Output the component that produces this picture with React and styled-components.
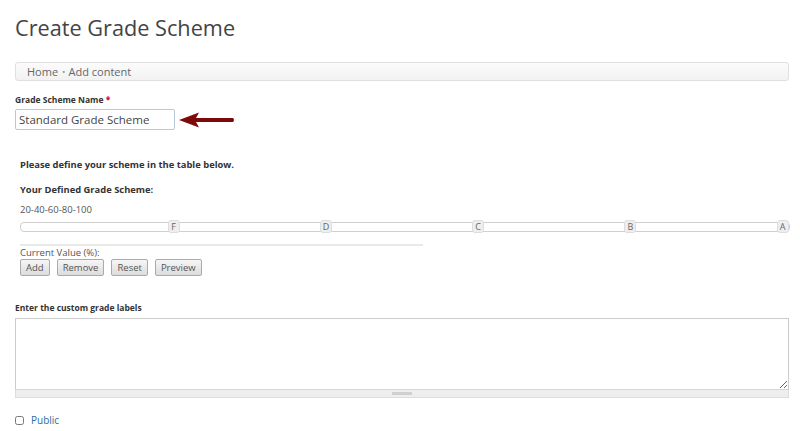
import styled, { createGlobalStyle } from "styled-components";

const GlobalStyle = createGlobalStyle`
  body {
    margin: 0;
    background: #fff;
    font-family: "Open Sans", "Liberation Sans", sans-serif;
    color: #444;
  }
`;

const grades = [
  { label: "F", value: 20 },
  { label: "D", value: 40 },
  { label: "C", value: 60 },
  { label: "B", value: 80 },
  { label: "A", value: 100 },
];

const App = () => {
  return (
    <Page>
      <GlobalStyle />
      <Title>Create Grade Scheme</Title>

      <Breadcrumb>
        <a>Home</a>
        <Dot>•</Dot>
        <a>Add content</a>
      </Breadcrumb>

      <FieldLabel>
        Grade Scheme Name <Required>*</Required>
      </FieldLabel>
      <InputRow>
        <TextInput defaultValue="Standard Grade Scheme" />
        <svg width="56" height="16" viewBox="0 0 56 16">
          <path d="M0 8 L20 0.5 L17 6 L54 6 Q56 8 54 10 L17 10 L20 15.5 Z" fill="#7d0a0a" />
        </svg>
      </InputRow>

      <Scheme>
        <Heading>Please define your scheme in the table below.</Heading>
        <SubHeading>Your Defined Grade Scheme:</SubHeading>
        <Values>20-40-60-80-100</Values>

        <Slider>
          {grades.map((g) => (
            <Handle
              key={g.label}
              style={{ left: `calc(${g.value}% - ${(g.value * 0.07 + 5.5).toFixed(1)}px)` }}
            >
              {g.label}
            </Handle>
          ))}
        </Slider>

        <Divider />
        <CurrentValue>Current Value (%):</CurrentValue>
        <Buttons>
          <Button>Add</Button>
          <Button>Remove</Button>
          <Button>Reset</Button>
          <Button>Preview</Button>
        </Buttons>
      </Scheme>

      <FieldLabel $top="25px">Enter the custom grade labels</FieldLabel>
      <TextAreaWrap>
        <TextArea />
        <Grippie>
          <span />
        </Grippie>
      </TextAreaWrap>

      <CheckRow>
        <CheckBox />
        <CheckLabel>Public</CheckLabel>
      </CheckRow>
    </Page>
  );
};

const Page = styled.div`
  padding: 14px 11px 0 15px;
  width: 774px;
`;

const Title = styled.h1`
  margin: 0;
  font-size: 21.7px;
  font-weight: 400;
  line-height: 28px;
  color: #444;
`;

const Breadcrumb = styled.div`
  margin-top: 20px;
  height: 17px;
  display: flex;
  align-items: center;
  padding-left: 11px;
  border: 1px solid #e0e0e0;
  border-radius: 3px;
  background: linear-gradient(#fbfbfb, #f2f2f2);
  font-size: 11px;
  color: #666;

  a {
    color: #666;
  }
`;

const Dot = styled.span`
  font-size: 9px;
  color: #999;
  margin: 0 3px 0 4px;
`;

const FieldLabel = styled.div`
  margin-top: ${(p) => p.$top || "12px"};
  font-size: 8.5px;
  font-weight: 700;
  color: #333;
  line-height: 14px;
`;

const Required = styled.span`
  color: #c00;
`;

const InputRow = styled.div`
  margin-top: 2px;
  display: flex;
  align-items: center;
  gap: 4px;
`;

const TextInput = styled.input`
  box-sizing: border-box;
  width: 160px;
  height: 21px;
  padding: 0 3px;
  border: 1px solid #b9c9d9;
  border-radius: 2px;
  font-family: "Open Sans", "Liberation Sans", sans-serif;
  font-size: 11.5px;
  color: #444;
  outline: none;
`;

const Scheme = styled.div`
  padding-left: 5px;
  margin-top: 28px;
`;

const Heading = styled.div`
  font-size: 9.4px;
  font-weight: 700;
  color: #333;
  line-height: 14px;
`;

const SubHeading = styled(Heading)`
  margin-top: 11px;
`;

const Values = styled.div`
  margin-top: 6px;
  font-size: 9.5px;
  color: #555;
  line-height: 14px;
`;

const Slider = styled.div`
  position: relative;
  margin-top: 5px;
  height: 8px;
  width: 768px;
  border: 1px solid #cfcfcf;
  border-radius: 4px;
  background: #fff;
`;

const Handle = styled.div`
  position: absolute;
  top: -3px;
  width: 12px;
  height: 13px;
  box-sizing: border-box;
  border: 1px solid #ddd;
  border-radius: 3px;
  background: #eee;
  font-size: 9px;
  line-height: 11px;
  text-align: center;
  color: #666;
`;

const Divider = styled.div`
  margin-top: 12px;
  width: 403px;
  height: 2px;
  background: #e8e8e8;
`;

const CurrentValue = styled.div`
  font-size: 9.5px;
  color: #555;
  line-height: 13px;
`;

const Buttons = styled.div`
  display: flex;
  gap: 7px;
`;

const Button = styled.button`
  height: 17px;
  padding: 0 5px;
  border: 1px solid #aaa;
  border-radius: 2px;
  background: linear-gradient(#f6f6f6, #dcdcdc);
  font-family: "Open Sans", "Liberation Sans", sans-serif;
  font-size: 9.5px;
  color: #555;
  line-height: 14px;
`;

const TextAreaWrap = styled.div`
  margin-top: 3px;
  width: 774px;
`;

const TextArea = styled.textarea`
  display: block;
  box-sizing: border-box;
  width: 100%;
  height: 72px;
  margin: 0;
  border: 1px solid #ccc;
  border-bottom-color: #d6d6d6;
  resize: vertical;
  outline: none;
`;

const Grippie = styled.div`
  height: 7px;
  background: #eee;
  border: 1px solid #ddd;
  border-top: none;
  display: flex;
  justify-content: center;
  align-items: center;

  span {
    width: 20px;
    height: 3px;
    background: #d0d0d0;
  }
`;

const CheckRow = styled.div`
  margin-top: 15px;
  display: flex;
  align-items: center;
  gap: 7px;
`;

const CheckBox = styled.input.attrs({ type: "checkbox" })`
  margin: 0;
  width: 9px;
  height: 9px;
`;

const CheckLabel = styled.label`
  font-size: 10px;
  color: #2d6ca2;
`;

export default App;
